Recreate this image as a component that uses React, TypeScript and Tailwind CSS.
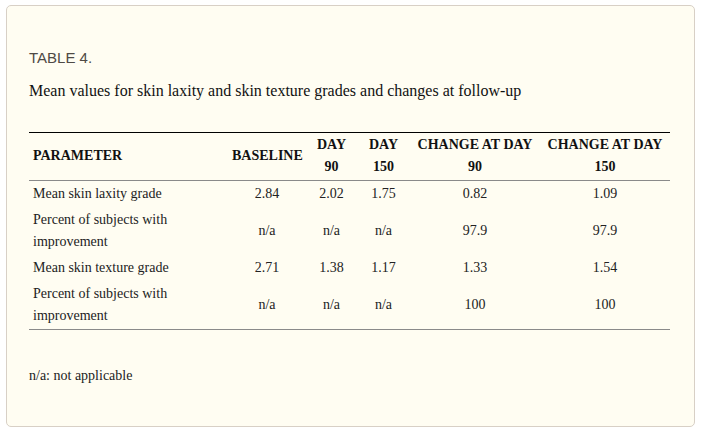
const rows: { label: string; values: string[] }[] = [
  { label: 'Mean skin laxity grade', values: ['2.84', '2.02', '1.75', '0.82', '1.09'] },
  { label: 'Percent of subjects with improvement', values: ['n/a', 'n/a', 'n/a', '97.9', '97.9'] },
  { label: 'Mean skin texture grade', values: ['2.71', '1.38', '1.17', '1.33', '1.54'] },
  { label: 'Percent of subjects with improvement', values: ['n/a', 'n/a', 'n/a', '100', '100'] },
];

const headers = ['BASELINE', 'DAY 90', 'DAY 150', 'CHANGE AT DAY 90', 'CHANGE AT DAY 150'];

export default function App() {
  return (
    <div className="min-h-screen bg-white pl-[6px] pt-[5px]">
      <div className="h-[422px] w-[689px] rounded-[5px] border border-[#d8d0c6] bg-[#fffdf2] px-[22px] pt-[42px]">
        <div className="font-['Liberation_Sans',Arial,sans-serif] text-[15px] leading-[20px] text-[#4f4a45]">TABLE 4.</div>
        <p className="mt-[13px] font-['Liberation_Serif','Times_New_Roman',serif] text-[16px] leading-[20px] text-[#111]">
          Mean values for skin laxity and skin texture grades and changes at follow-up
        </p>
        <table className="mt-[31px] w-[641px] table-fixed border-collapse font-['Liberation_Serif','Times_New_Roman',serif] text-[14px] leading-[22px] text-[#222]">
          <colgroup>
            <col className="w-[199px]" />
            <col className="w-[78px]" />
            <col className="w-[51px]" />
            <col className="w-[53px]" />
            <col className="w-[130px]" />
            <col className="w-[130px]" />
          </colgroup>
          <thead>
            <tr className="border-t border-b border-t-black border-b-[#8a8a8a]">
              <th className="px-[4px] pt-[1px] pb-[2px] text-left align-middle font-bold text-[#111]">PARAMETER</th>
              {headers.map((h) => (
                <th key={h} className="px-[4px] pt-[1px] pb-[2px] text-center align-middle font-bold text-[#111]">
                  {h}
                </th>
              ))}
            </tr>
          </thead>
          <tbody className="border-b border-[#8a8a8a]">
            {rows.map((r, i) => (
              <tr key={i}>
                <td className="px-[4px] py-[2px] text-left align-middle">{r.label}</td>
                {r.values.map((v, j) => (
                  <td key={j} className="px-[4px] py-[2px] text-center align-middle">
                    {v}
                  </td>
                ))}
              </tr>
            ))}
          </tbody>
        </table>
        <div className="mt-[36px] font-['Liberation_Serif','Times_New_Roman',serif] text-[14px] leading-[20px] text-[#222]">
          n/a: not applicable
        </div>
      </div>
    </div>
  );
}
